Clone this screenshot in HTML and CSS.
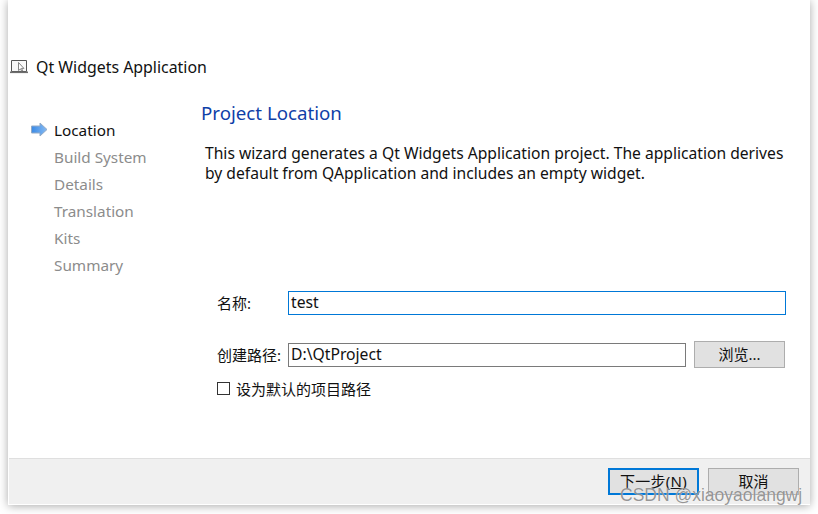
FILE: index.html
```html
<!DOCTYPE html>
<html lang="zh">
<head>
<meta charset="utf-8">
<title>Qt Widgets Application</title>
<link rel="stylesheet" href="styles.css">
</head>
<body>
<div class="window">
  <header class="title">
    <svg class="app-icon" width="20" height="16" viewBox="0 0 20 16">
      <path d="M2.5 1.5h15v11h-15z" fill="#f8f8f8" stroke="#555"/>
      <path d="M1 12.5h18v1.6H1z" fill="#6e6e6e"/>
      <path d="M9.5 3.5v8l2-1.6 1.2 2.3 1-.5-1.2-2.3h2.4z" fill="#fff" stroke="#666" stroke-width=".8"/>
    </svg>
    <span>Qt Widgets Application</span>
  </header>
  <div class="body">
    <nav class="steps">
      <div class="step current">
        <svg class="arrow" width="18" height="15" viewBox="0 0 18 15">
          <defs>
            <linearGradient id="arrow-fill" x1="0" y1="0" x2="1" y2="0">
              <stop offset="0" stop-color="#3a8ae6"/>
              <stop offset="1" stop-color="#86baf2"/>
            </linearGradient>
          </defs>
          <path d="M1.5 4h8.5V1l7 6.5-7 6.5v-3H1.500z" fill="url(#arrow-fill)" stroke="#93aac6"/>
        </svg>
        <span>Location</span>
      </div>
      <div class="step">Build System</div>
      <div class="step">Details</div>
      <div class="step">Translation</div>
      <div class="step">Kits</div>
      <div class="step">Summary</div>
    </nav>
    <main class="page">
      <h1>Project Location</h1>
      <p class="intro">This wizard generates a Qt Widgets Application project. The application derives by default from QApplication and includes an empty widget.</p>
      <form class="form">
        <div class="row name-row">
          <label class="lbl">名称:</label>
          <div class="field focused">test</div>
        </div>
        <div class="row path-row">
          <label class="lbl">创建路径:</label>
          <div class="field path">D:\QtProject</div>
          <div class="btn browse">浏览...</div>
        </div>
        <div class="check-row">
          <span class="check"></span>
          <span>设为默认的项目路径</span>
        </div>
      </form>
    </main>
  </div>
  <footer class="footer">
    <div class="btn primary">下一步(<u>N</u>)</div>
    <div class="btn cancel">取消</div>
  </footer>
</div>
<div class="watermark">CSDN @xiaoyaolangwj</div>
</body>
</html>
```
FILE: styles.css
```css
html, body {
  margin: 0;
  padding: 0;
  height: 514px;
  overflow: hidden;
  background: #fff;
}
body {
  position: relative;
  font-family: "Noto Sans", "Noto Sans CJK SC", sans-serif;
  font-size: 15px;
  color: #111;
}
.window {
  margin-left: 8px;
  width: 802px;
  height: 505px;
  background: #fff;
  box-shadow: 0 1px 9px rgba(0, 0, 0, 0.34);
  display: flex;
  flex-direction: column;
  box-sizing: border-box;
  padding-bottom: 1px;
}
.title {
  display: flex;
  align-items: center;
  gap: 7px;
  height: 22px;
  margin-top: 56px;
  padding-left: 1px;
  font-size: 15.9px;
}
.body {
  flex: 1;
  display: flex;
}
.steps {
  width: 193px;
  padding-top: 39px;
  display: flex;
  flex-direction: column;
  padding-left: 46px;
  box-sizing: border-box;
  color: #8c8c8c;
  font-size: 15.3px;
}
.step {
  height: 27px;
  line-height: 27px;
  position: relative;
}
.step.current {
  color: #111;
}
.arrow {
  position: absolute;
  left: -24px;
  top: 5px;
}
.page {
  flex: 1;
  min-width: 0;
}
h1 {
  margin: 0;
  padding-top: 21px;
  font-size: 18.7px;
  line-height: 28px;
  font-weight: 400;
  color: #0f3fa8;
}
.intro {
  margin: 16px 0 0 4px;
  width: 590px;
  font-size: 15.65px;
  line-height: 20px;
}
.form {
  margin-top: 108px;
  margin-left: 16px;
}
.row {
  display: flex;
  align-items: center;
}
.lbl {
  width: 71px;
  flex: none;
  font-size: 15px;
  line-height: 20px;
}
.field {
  box-sizing: border-box;
  height: 24px;
  line-height: 20px;
  border: 1px solid #7a7a7a;
  padding-left: 2px;
  background: #fff;
  font-size: 15.7px;
}
.focused {
  width: 498px;
  border-color: #0078d7;
}
.path {
  width: 398px;
}
.path-row {
  margin-top: 26px;
}
.btn {
  box-sizing: border-box;
  height: 27px;
  line-height: 25px;
  text-align: center;
  background: #e1e1e1;
  border: 1px solid #adadad;
  font-size: 15px;
}
.browse {
  width: 91px;
  margin-left: 8px;
}
.check-row {
  margin-top: 10px;
  display: flex;
  align-items: center;
  gap: 6px;
  font-size: 15px;
  height: 20px;
}
.check {
  width: 13px;
  height: 13px;
  box-sizing: border-box;
  border: 1px solid #333;
  background: #fff;
}
.footer {
  height: 46px;
  margin: 0 0 0 1px;
  box-sizing: border-box;
  background: #f0f0f0;
  border-top: 1px solid #dfdfdf;
  display: flex;
  justify-content: flex-end;
  gap: 9px;
  padding: 9px 11px 0 0;
}
.footer .btn {
  width: 91px;
}
.primary {
  border: 2px solid #0078d7;
  line-height: 23px;
  letter-spacing: 0.3px;
}
.watermark {
  position: absolute;
  left: 620px;
  top: 485px;
  font-family: "Liberation Sans", sans-serif;
  font-size: 17.5px;
  color: rgba(110, 110, 110, 0.72);
  text-shadow: 0 0 1px rgba(255, 255, 255, 0.9);
}
```
